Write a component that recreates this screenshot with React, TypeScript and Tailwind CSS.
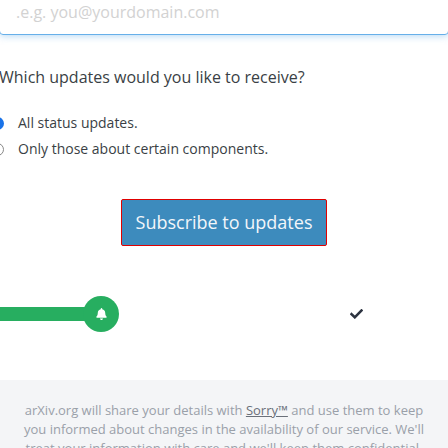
import React from "react";

export default function App() {
  return (
    <div
      className="w-[448px] h-[448px] overflow-hidden bg-white relative flex flex-col"
      style={{ fontFamily: '"Open Sans", sans-serif' }}
    >
      <div className="-ml-px -mt-[11px] w-[450px] h-[46px] shrink-0 rounded-[4px] border border-[#66afe9] shadow-[0_0_8px_rgba(102,175,233,0.6)] flex items-center pl-[16px]">
        <span className="text-[16px] text-[#d2d2d2]">.e.g. you@yourdomain.com</span>
      </div>

      <div className="-ml-px mt-[31px] text-[16px] leading-[22px] text-[#3a3f45]">
        Which updates would you like to receive?
      </div>

      <div className="mt-[25px] flex flex-col gap-[6px] text-[14px] leading-[20px] text-[#3a3f45]">
        <div className="flex items-center">
          <span className="-ml-[9px] w-[13px] h-[13px] rounded-full border-[4px] border-[#1a73e8] bg-white shrink-0" />
          <span className="ml-[14px]">All status updates.</span>
        </div>
        <div className="flex items-center">
          <span className="-ml-[9px] w-[13px] h-[13px] rounded-full border border-[#888] bg-white shrink-0" />
          <span className="ml-[14px]">Only those about certain components.</span>
        </div>
      </div>

      <div className="flex justify-center mt-[40px]">
        <button className="w-[206px] h-[47px] border border-[#e00000] bg-[#3d8bbd] rounded-[2px] text-[18px] text-[#f2f6fa] flex items-center justify-center">
          Subscribe to updates
        </button>
      </div>

      <div className="flex items-center mt-[50px] h-[36px]">
        <div className="w-[90px] h-[14px] bg-[#27ae60]" />
        <div className="-ml-[7px] w-[36px] h-[36px] rounded-full bg-[#27ae60] flex items-center justify-center">
          <svg width="11" height="12" viewBox="0 0 448 512" fill="white">
            <path d="M224 512c35 0 64-29 64-64H160c0 35 29 64 64 64zm215-150c-19-21-56-52-56-154 0-78-54-140-127-155V32c0-18-14-32-32-32s-32 14-32 32v21C119 68 65 130 65 208c0 102-37 133-56 154-6 6-9 14-9 22 0 16 13 32 32 32h384c19 0 32-16 32-32 0-8-3-16-9-22z" />
          </svg>
        </div>
        <svg className="ml-[231px]" width="13" height="10" viewBox="0 0 13 10">
          <path d="M1.5 5.2 L4.8 8.3 L11.5 1.5" stroke="#2c3340" strokeWidth="2.6" fill="none" strokeLinecap="square" />
        </svg>
      </div>

      <div className="mt-[48px] flex-1 bg-[#f4f5f7] px-[14px] pt-[21px] text-center text-[13px] leading-[19px] text-[#9aa0a9]">
        arXiv.org will share your details with{" "}
        <span className="underline text-[#6a707a]">Sorry™</span> and use them to keep
        <br />
        you informed about changes in the availability of our service. We'll
        <br />
        treat your information with care and we'll keep them confidential.
      </div>
    </div>
  );
}
